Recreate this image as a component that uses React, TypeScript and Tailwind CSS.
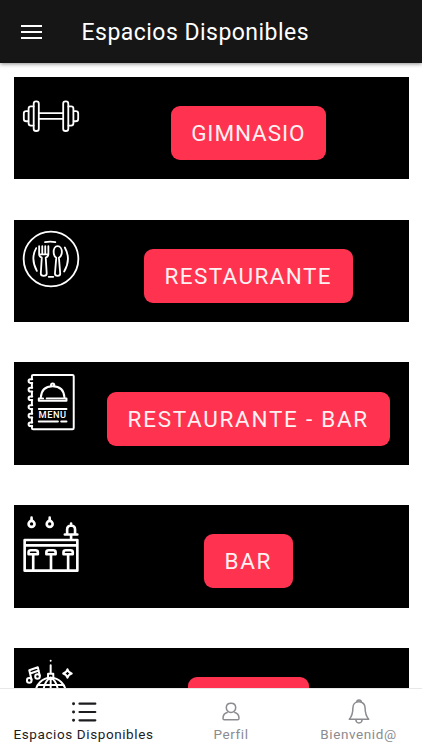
import type { ReactNode } from 'react';

// --- Space icons (white line drawings) --- //
const GymIcon = () => (
  <svg viewBox="38 54 170 170" className="size-14 overflow-visible" fill="none" stroke="white" strokeWidth={5.500} strokeLinecap="round" strokeLinejoin="round" aria-hidden="true">
    <rect x="70.5" y="94.5" width="15.5" height="90" rx="7" />
    <rect x="160" y="94.5" width="15.5" height="90" rx="7" />
    <path d="M86 130h74M86 148h74" />
    <path d="M70 110h-8q-7 0-7 7v44q0 7 7 7h8M176 110h8q7 0 7 7v44q0 7-7 7h-8" />
    <path d="M54 124h-6q-7.500 0-7.500 7v17q0 7 7.500 7h6M192 124h6q7.500 0 7.500 7v17q0 7-7.500 7h-6" />
  </svg>
);

const RestaurantIcon = () => (
  <svg viewBox="38 48 170 170" className="size-14 overflow-visible" fill="none" stroke="white" strokeWidth={5.500} strokeLinecap="round" strokeLinejoin="round" aria-hidden="true">
    <circle cx="123" cy="133" r="83" />
    <path d="M105 82q16-4 31 0M116 187h14" />
    <path d="M78 100q-18 32 2 69M165 98q20 36-2 73" />
    <path d="M87 94v24q0 8 8 11l-3 48q0 7 9 7t9-7l-3-48q8-3 8-11V94M96.500 94v24M105.500 94v24M87 119h28" />
    <path d="M143 94c-8 0-12 9-12 18 0 8 3 14 8 17l-4 48q0 7 8 7t8-7l-4-48c5-3 9-9 9-17 0-9-5-18-13-18z" />
  </svg>
);

const MenuIcon = () => (
  <svg viewBox="38 47 170 170" className="size-14 overflow-visible" fill="none" stroke="white" strokeWidth={6} strokeLinecap="round" strokeLinejoin="round" aria-hidden="true">
    <path d="M65 63V54q0-4 4-4h119q4 0 4 4v157q0 4-4 4H69q-4 0-4-4v-7M65 74v15M65 101v14M65 127v14M65 153v14M65 179v15" />
    <path d="M66 63H60q-5 0-5 5.500t5 5.500h6M66 89H60q-5 0-5 5.500t5 5.500h6M66 115H60q-5 0-5 5.500t5 5.500h6M66 142H60q-5 0-5 5.500t5 5.500h6M66 168H60q-5 0-5 5.500t5 5.500h6M66 194H60q-5 0-5 5.500t5 5.500h6" />
    <path d="M92 119q2-35 36-35t36 35M123 84v-3q0-5 5-5t5 5v3" />
    <path d="M99 121H86v7h84v-7h-60" />
    <path d="M86 153h84M86 191h58M154 191h16" />
    <text x="85" y="181.5" textLength="84" lengthAdjust="spacing" fill="white" stroke="none" className="font-['Roboto',sans-serif] text-[28px] font-medium tracking-normal">MENU</text>
  </svg>
);

const BarIcon = () => (
  <svg viewBox="38 48 170 170" className="size-14 overflow-visible" fill="none" stroke="white" strokeWidth={8} strokeLinecap="round" strokeLinejoin="round" aria-hidden="true">
    <circle cx="64" cy="72" r="9" />
    <circle cx="119" cy="72" r="9" />
    <path d="M64 53v9M119 53v9" />
    <path d="M43 121h160v16H43zM43 137v77h160v-77" />
    <path d="M165 104h38M172 103V89q0-11 12-12 12 1 12 12v14M184 71v6M184 104v13" />
    <path d="M55 158q0-6 7-6h14q7 0 7 6v6H55zM109 158q0-6 7-6h14q7 0 7 6v6h-28zM161 158q0-6 7-6h14q7 0 7 6v6h-28z" />
    <path d="M69 166v47M123 166v47M175 166v47" />
  </svg>
);

const DiscoIcon = () => (
  <svg viewBox="38 59 170 170" className="size-14 overflow-visible" fill="none" stroke="white" strokeWidth={6} strokeLinecap="round" strokeLinejoin="round" aria-hidden="true">
    <path d="M122 64v.5M122 78v24M114 117v-13h16v13" />
    <circle cx="122" cy="162" r="46" />
    <path d="M122 116v92M121 116c-14 8-21 25-21 46s7 38 21 46M123 116c14 8 21 25 21 46s-7 38-21 46M84 138h76M77 160h90" />
    <circle cx="57" cy="124" r="7" />
    <circle cx="82" cy="112" r="7" />
    <path d="M64 122l-7-29 26-9 6 26M60 103l26-9" />
    <path d="M173 90q3 11 13 13-10 3-13 13-3-10-13-13 10-2 13-13z" />
  </svg>
);

// --- Tab icons --- //
const ListIcon = () => (
  <svg viewBox="0 0 26 20" className="h-5 w-[26px] overflow-visible" fill="none" stroke="currentColor" strokeWidth={2.2} strokeLinecap="round" aria-hidden="true">
    <path d="M8.500 1.700h15.800M8.500 10h15.800M8.500 18.300h15.800" />
    <path d="M2.500 1.700h.1M2.500 10h.1M2.500 18.300h.1" strokeWidth={2.900} />
  </svg>
);

const PersonIcon = () => (
  <svg viewBox="0 0 18 19" className="h-[19px] w-[18px]" fill="none" stroke="currentColor" strokeWidth={1.500} strokeLinejoin="round" aria-hidden="true">
    <path d="M9 1.200c-2.900 0-4.700 2-4.700 4.500S6.300 10.600 9 10.600s4.700-2.400 4.700-4.900S11.900 1.200 9 1.200z" />
    <path d="M5.800 10.200C2.700 11 1 13.400 1 16.200q0 1.600 1.400 1.600h13.200q1.400 0 1.400-1.600c0-2.800-1.700-5.200-4.800-6" />
  </svg>
);

const BellIcon = () => (
  <svg viewBox="0 0 22 25" className="h-[25px] w-[22px]" fill="none" stroke="currentColor" strokeWidth={1.500} strokeLinejoin="round" aria-hidden="true">
    <path d="M8.700 3.200q0-2.300 2.300-2.300t2.300 2.300" />
    <path d="M11 2.800c-4 0-6.100 2.800-6.100 6.200 0 5.500-.8 8-3.600 11.200h19.400c-2.800-3.200-3.600-5.700-3.600-11.200 0-3.400-2.100-6.200-6.100-6.200z" />
    <path d="M7.800 20.500q.3 3.400 3.200 3.400t3.200-3.400" />
  </svg>
);

interface Space {
  id: string;
  label?: string;
  icon: ReactNode;
  // Button width and letter spacing
  button: string;
}

const spaces: Space[] = [
  { id: 'gym', label: 'GIMNASIO', icon: <GymIcon />, button: 'w-[155px] tracking-[0.9px]' },
  { id: 'restaurant', label: 'RESTAURANTE', icon: <RestaurantIcon />, button: 'w-[209px] tracking-[1.4px]' },
  { id: 'restaurant-bar', label: 'RESTAURANTE - BAR', icon: <MenuIcon />, button: 'w-[283px] tracking-[1.72px]' },
  { id: 'bar', label: 'BAR', icon: <BarIcon />, button: 'w-[89px] tracking-[1.6px]' },
  { id: 'disco', icon: <DiscoIcon />, button: 'w-[121px]' },
];

const tabs = [
  { label: 'Espacios Disponibles', icon: <ListIcon />, style: 'w-[167px] text-[#1c1c1f] tracking-[0.6px]' },
  { label: 'Perfil', icon: <PersonIcon />, style: 'w-[128px] text-[#8b8b90] tracking-[0.6px]' },
  { label: 'Bienvenid@', icon: <BellIcon />, style: 'w-[127px] text-[#8b8b90] tracking-[0.6px]' },
];

export default function App() {
  return (
    <div className="flex h-[750px] w-[422px] flex-col overflow-hidden bg-white font-['Roboto',sans-serif]">
      {/* Header */}
      <header className="z-10 flex h-[63px] shrink-0 items-center bg-[#161616] pt-px pl-[21px] text-white shadow-[0_1px_4px_rgba(0,0,0,0.45)]">
        <button className="flex w-[21px] flex-col gap-1" aria-label="Abrir menú">
          <span className="h-0.5 w-full bg-white" />
          <span className="h-0.5 w-full bg-white" />
          <span className="h-0.5 w-full bg-white" />
        </button>
        <h1 className="ml-[39.5px] pt-[2px] text-[23px] whitespace-nowrap tracking-[0.47px]">Espacios Disponibles</h1>
      </header>

      {/* Space list, runs under the tab bar */}
      <main className="flex min-h-0 flex-1 flex-col gap-[40.25px] overflow-hidden px-[13.5px] pt-[13.9px]">
        {spaces.map((space) => (
          <section key={space.id} className="flex h-[102.5px] shrink-0 bg-black pt-[11.2px] pl-[9.4px]">
            {space.icon}
            <div className="flex flex-1 justify-center pt-[18px] pl-[9.1px]">
              <button className={`flex h-[54px] items-center justify-center rounded-[9px] bg-[#ff3350] pt-[2px] text-[22.5px] whitespace-nowrap text-[#fff0f2] ${space.button}`}>
                {space.label}
              </button>
            </div>
          </section>
        ))}
      </main>

      {/* Tab bar */}
      <nav className="flex h-[62px] shrink-0 border-t border-[#e8e8e8] bg-white">
        {tabs.map((tab) => (
          <button key={tab.label} className={`flex flex-col items-center pt-[10px] text-[13.5px] leading-4 whitespace-nowrap ${tab.style}`}>
            <span className="flex h-[25px] items-center">{tab.icon}</span>
            <span className="mt-[2px]">{tab.label}</span>
          </button>
        ))}
      </nav>
    </div>
  );
}
